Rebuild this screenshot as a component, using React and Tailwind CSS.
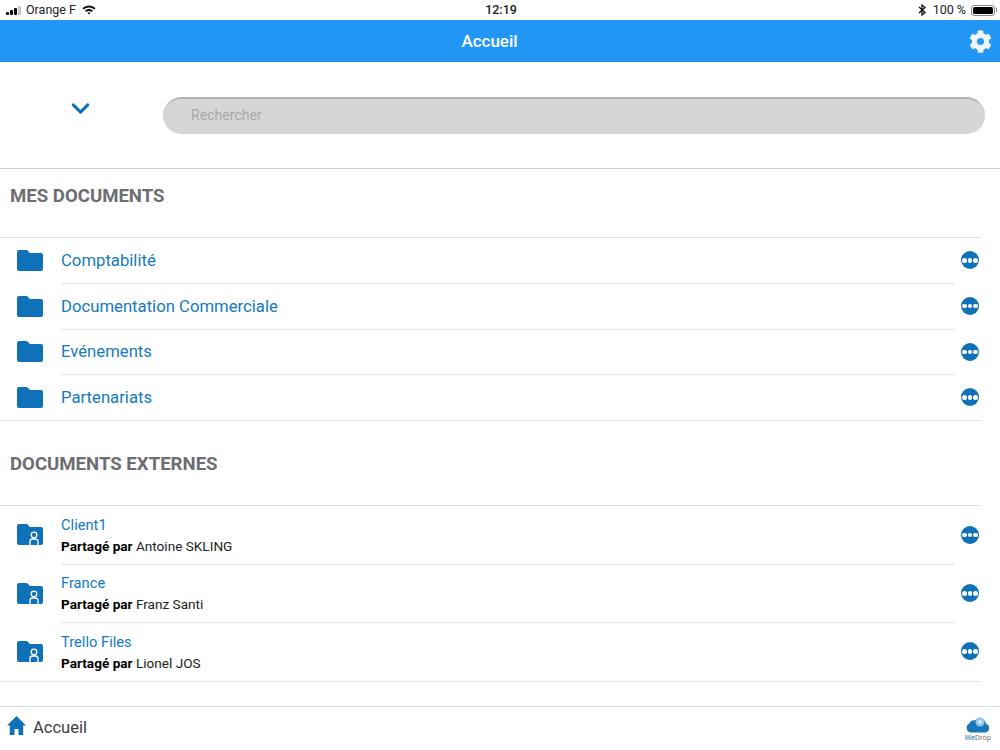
import { ChevronDown } from 'lucide-react';
import { FaCog } from 'react-icons/fa';

const docs = ['Comptabilité', 'Documentation Commerciale', 'Evénements', 'Partenariats'];
const shared = [
  { name: 'Client1', by: 'Antoine SKLING' },
  { name: 'France', by: 'Franz Santi' },
  { name: 'Trello Files', by: 'Lionel JOS' },
];

function Folder({ user }) {
  return (
    <svg width="26" height="21" viewBox="0 0 26 21" className="shrink-0">
      <path d="M2 0h7c1 0 1.600.4 2.200 1.100L12.800 3H24a2 2 0 0 1 2 2v14a2 2 0 0 1-2 2H2a2 2 0 0 1-2-2V2a2 2 0 0 1 2-2z" fill="#0f72b8" />
      {user && (
        <g fill="none" stroke="#fff" strokeWidth="1.300">
          <circle cx="17" cy="11" r="2.800" />
          <path d="M13 21v-3.500a2.500 2.500 0 0 1 2.500-2.500h3a2.500 2.500 0 0 1 2.500 2.500V21" />
        </g>
      )}
    </svg>
  );
}

function Dots() {
  return (
    <div className="w-[18px] h-[18px] rounded-full bg-[#0f72b8] flex items-center justify-center gap-[1px] shrink-0">
      <span className="w-[4.500px] h-[4.500px] rounded-full bg-white" />
      <span className="w-[4.500px] h-[4.500px] rounded-full bg-white" />
      <span className="w-[4.500px] h-[4.500px] rounded-full bg-white" />
    </div>
  );
}

function Row({ last, height, children, user }) {
  return (
    <div className={`relative flex items-stretch shrink-0 mr-[20px] ${height} ${last ? 'border-b border-[#e4e4e4]' : ''}`}>
      <div className="w-[61px] pl-[17px] pb-[1px] flex items-center shrink-0">
        <Folder user={user} />
      </div>
      <div className={`flex-1 flex items-center ${last ? '' : 'border-b border-[#e4e4e4] mr-[25px]'}`}>
        <div className="flex-1 min-w-0">{children}</div>
      </div>
      <div className="absolute right-[1px] top-0 bottom-[1px] flex items-center">
        <Dots />
      </div>
    </div>
  );
}

function StatusBar() {
  return (
    <div className="h-[20px] shrink-0 flex items-center justify-between relative text-[12.500px] text-[#222] pl-[6px] pr-[3px]">
      <div className="flex items-center gap-[5px]">
        <div className="flex items-end gap-[1px] h-[9px]">
          <span className="w-[3px] h-[3px] bg-black rounded-[1px]" />
          <span className="w-[3px] h-[5px] bg-black rounded-[1px]" />
          <span className="w-[3px] h-[7px] bg-black rounded-[1px]" />
          <span className="w-[3px] h-[9px] bg-[#c4c4c4] rounded-[1px]" />
        </div>
        <span>Orange F</span>
        <svg width="14" height="10" viewBox="0 0 14 10" className="ml-[1px]">
          <path d="M0.500 3.200C4.200-.4 9.800-.4 13.500 3.200L12.200 4.600C9.200 1.800 4.800 1.800 1.800 4.600z" fill="#111" />
          <path d="M3 5.600c2.300-2.100 5.700-2.100 8 0L9.700 7C8.100 5.700 5.900 5.700 4.300 7z" fill="#111" />
          <path d="M5.400 7.800c.9-.7 2.300-.7 3.200 0L7 9.500z" fill="#111" />
        </svg>
      </div>
      <div className="absolute left-0 right-0 text-center font-medium pl-[2px]">12:19</div>
      <div className="flex items-center gap-[5px]">
        <svg width="8" height="12" viewBox="0 0 8 12" fill="none" stroke="#111" strokeWidth="1.300" className="mr-[2px]">
          <path d="M1 3l6 5.500L4 11V1l3 2.500L1 9" />
        </svg>
        <span>100 %</span>
        <div className="flex items-center">
          <div className="w-[24px] h-[11px] border border-[#888] rounded-[3px] p-[1px]">
            <div className="w-full h-full bg-black rounded-[1.500px]" />
          </div>
          <span className="w-[1px] h-[4px] bg-[#888] ml-[1px]" />
        </div>
      </div>
    </div>
  );
}

export default function App() {
  return (
    <div className="w-[1000px] h-[750px] bg-white flex flex-col overflow-hidden font-['Roboto','Liberation_Sans',sans-serif]">
      <StatusBar />

      {/* Navbar */}
      <nav className="h-[42px] shrink-0 bg-[#2196f5] flex items-center justify-center relative">
        <h1 className="text-[17px] font-medium text-white pr-[21px] pt-[1px]">Accueil</h1>
        <FaCog className="absolute right-[8px] top-[10px] text-[#eef6fd]" size={23} />
      </nav>

      {/* Search */}
      <div className="h-[107px] shrink-0 flex items-center border-b border-[#c9c9c9] pt-[1px]">
        <div className="w-[163px] flex justify-center pb-[15px] pr-[3px]">
          <ChevronDown className="text-[#0f72b8]" size={29} strokeWidth={2.500} />
        </div>
        <div className="w-[822px] h-[37px] rounded-full bg-[#d6d6d6] border-t-2 border-[#b4b4b4] flex items-center pl-[28px] pb-[2px] text-[14.100px] text-[#a9a9a9]">
          Rechercher
        </div>
      </div>

      {/* Mes documents */}
      <h2 className="h-[69px] shrink-0 pt-[17px] pl-[10px] text-[18.600px] leading-[21px] font-bold text-[#6d6d72] border-b border-[#e0e0e0] mr-[20px]">MES DOCUMENTS</h2>
      {docs.map((d, i) => (
        <Row key={d} height="h-[45.800px]" last={i === docs.length - 1}>
          <span className="text-[16.700px] text-[#157abf]">{d}</span>
        </Row>
      ))}

      {/* Documents externes */}
      <h2 className="h-[85px] shrink-0 pt-[33px] pl-[10px] text-[18.600px] leading-[21px] font-bold text-[#6d6d72] border-b border-[#e0e0e0] mr-[20px]">DOCUMENTS EXTERNES</h2>
      {shared.map((s, i) => (
        <Row key={s.name} height="h-[58.500px]" user last={i === shared.length - 1}>
          <div className="text-[14.700px] leading-[18px] text-[#157abf]">{s.name}</div>
          <div className="text-[13.600px] leading-[16px] mt-[4px] text-[#222]">
            <span className="font-bold text-black">Partagé par</span> {s.by}
          </div>
        </Row>
      ))}

      {/* Footer */}
      <footer className="mt-[24.800px] h-[43.500px] shrink-0 border-t border-[#dcdcdc] flex items-center justify-between pl-[7px] pr-[9px]">
        <div className="flex items-center gap-[7px]">
          <svg width="19" height="19" viewBox="0 0 19 19" className="mb-[6px]">
            <path d="M9.500 0L19 9.500h-2.800V19h-4.700v-6h-4v6H2.800V9.500H0z" fill="#0f72b8" />
          </svg>
          <span className="text-[16.500px] text-[#3c3c3c]">Accueil</span>
        </div>
        <div className="flex flex-col items-center">
          <svg width="24" height="18" viewBox="0 0 24 18">
            <path d="M5.500 17.500A4.800 4.800 0 0 1 3.500 8.300a5 5 0 0 1 5.500-3A6.500 6.500 0 0 1 20 8.800a4.500 4.500 0 0 1-.5 8.700z" fill="#1a76b9" />
            <circle cx="14" cy="7" r="4.500" fill="#8fc6ea" />
            <circle cx="14" cy="7" r="2" fill="#cfe6f6" />
          </svg>
          <span className="text-[7.500px] leading-[9px] text-[#777]"><span className="text-[#1a76b9]">We</span>Drop</span>
        </div>
      </footer>
    </div>
  );
}
